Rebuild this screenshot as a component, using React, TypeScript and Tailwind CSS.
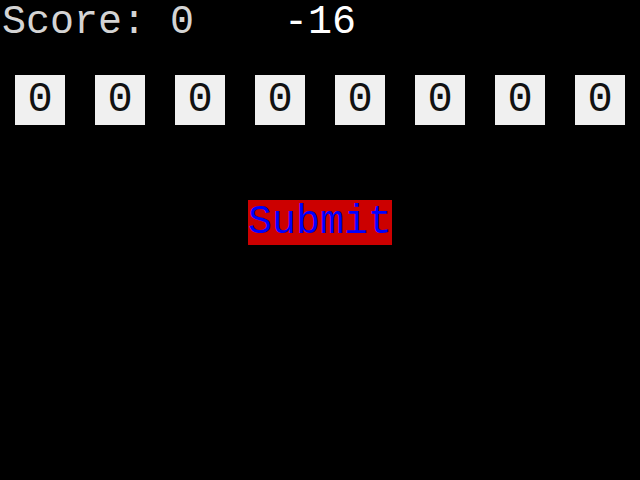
const digits = [0, 0, 0, 0, 0, 0, 0, 0];

export default function App() {
  return (
    <div className="h-[480px] w-[640px] bg-black font-['Courier_New','Liberation_Mono',monospace]">
      <div className="flex h-[45px] items-center pl-[2px] text-[40px] leading-[45px]">
        <span className="text-[#d4d4d4]">Score: 0</span>
        <span className="ml-[90px] text-white">-16</span>
      </div>
      <div className="mt-[30px] flex gap-[30px] pl-[15px]">
        {digits.map((d, i) => (
          <div
            key={i}
            className="flex size-[50px] items-center justify-center bg-[#f0f0f0] text-[42px] text-[#111]"
          >
            {d}
          </div>
        ))}
      </div>
      <div className="mt-[75px] flex justify-center">
        <button className="h-[45px] bg-[#cc0000] text-[40px] leading-[45px] text-[#0000ff]">
          Submit
        </button>
      </div>
    </div>
  );
}
